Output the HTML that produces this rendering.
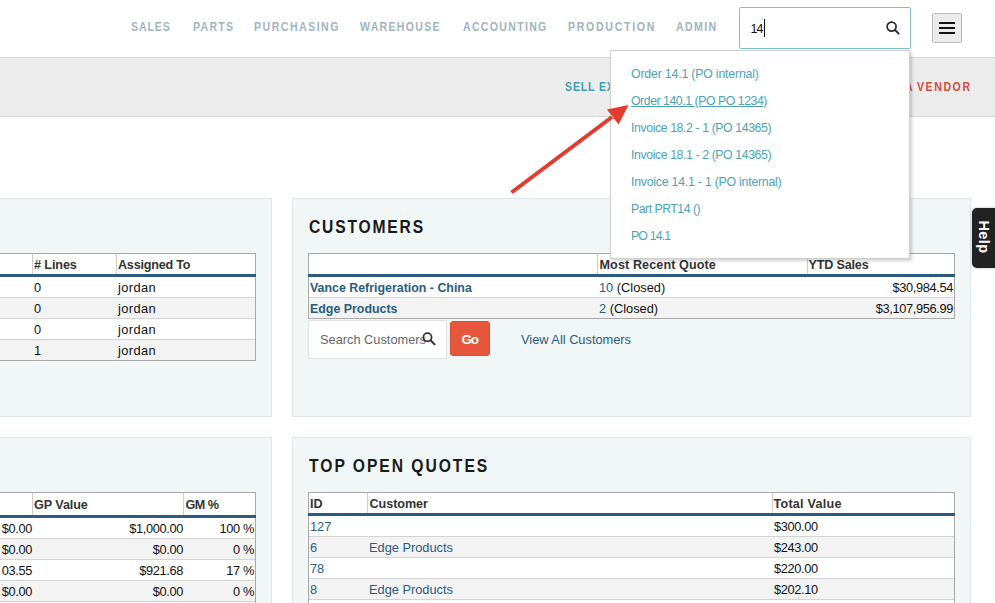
<!DOCTYPE html>
<html><head><meta charset="utf-8">
<style>
*{box-sizing:border-box;margin:0;padding:0}
html,body{width:995px;height:603px;overflow:hidden;background:#fff;font-family:"Liberation Sans",sans-serif;color:#111}
.t{position:absolute;white-space:nowrap}
.b{position:absolute}
</style></head><body>
<div class="t" style="left:131px;top:21.00px;font-size:12.3px;line-height:13.739px;font-weight:bold;color:#9fb4bf;letter-spacing:1.047px;transform:scaleX(0.86);transform-origin:0 0;">SALES</div>
<div class="t" style="left:192.5px;top:21.00px;font-size:12.3px;line-height:13.739px;font-weight:bold;color:#9fb4bf;letter-spacing:1.442px;transform:scaleX(0.86);transform-origin:0 0;">PARTS</div>
<div class="t" style="left:254px;top:21.00px;font-size:12.3px;line-height:13.739px;font-weight:bold;color:#9fb4bf;letter-spacing:1.724px;transform:scaleX(0.86);transform-origin:0 0;">PURCHASING</div>
<div class="t" style="left:360px;top:21.00px;font-size:12.3px;line-height:13.739px;font-weight:bold;color:#9fb4bf;letter-spacing:1.483px;transform:scaleX(0.86);transform-origin:0 0;">WAREHOUSE</div>
<div class="t" style="left:463px;top:21.00px;font-size:12.3px;line-height:13.739px;font-weight:bold;color:#9fb4bf;letter-spacing:1.501px;transform:scaleX(0.86);transform-origin:0 0;">ACCOUNTING</div>
<div class="t" style="left:568px;top:21.00px;font-size:12.3px;line-height:13.739px;font-weight:bold;color:#9fb4bf;letter-spacing:1.982px;transform:scaleX(0.86);transform-origin:0 0;">PRODUCTION</div>
<div class="t" style="left:676px;top:21.00px;font-size:12.3px;line-height:13.739px;font-weight:bold;color:#9fb4bf;letter-spacing:1.628px;transform:scaleX(0.86);transform-origin:0 0;">ADMIN</div>
<div class="b" style="left:739px;top:7px;width:172px;height:42px;border:1px solid #7dbfce;border-radius:2px;background:#fff"></div>
<div class="t" style="left:750.5px;top:23.00px;font-size:12.5px;line-height:13.963px;color:#111;letter-spacing:-1.0px;">14</div>
<div class="b" style="left:764px;top:19px;width:1.3px;height:18px;background:#111"></div>
<svg class="b" style="left:884px;top:19px" width="18" height="18" viewBox="0 0 18 18"><circle cx="7.6" cy="7.6" r="4.5" fill="none" stroke="#2a2a2a" stroke-width="1.7"/><line x1="10.8" y1="10.8" x2="14.6" y2="14.6" stroke="#2a2a2a" stroke-width="2" stroke-linecap="round"/></svg>
<div class="b" style="left:932px;top:13px;width:30px;height:30px;background:#ececec;border:1px solid #b8b8b8;border-radius:2px"></div>
<div class="b" style="left:939px;top:22px;width:16px;height:2.2px;background:#111"></div>
<div class="b" style="left:939px;top:27px;width:16px;height:2.2px;background:#111"></div>
<div class="b" style="left:939px;top:31.7px;width:16px;height:2.2px;background:#111"></div>
<div class="b" style="left:0px;top:57px;width:995px;height:60px;background:#ececec;border-top:1px solid #d6d6d6;border-bottom:1px solid #d6d6d6"></div>
<div class="t" style="left:565px;top:81.00px;font-size:12.3px;line-height:13.739px;font-weight:bold;color:#3d9db3;letter-spacing:0.969px;transform:scaleX(0.86);transform-origin:0 0;">SELL EX</div>
<div class="t" style="left:917px;top:81.00px;font-size:12.3px;line-height:13.739px;font-weight:bold;color:#d24e3b;letter-spacing:1.809px;transform:scaleX(0.86);transform-origin:0 0;">VENDOR</div>
<div class="t" style="left:905px;top:81.00px;font-size:12.3px;line-height:13.739px;font-weight:bold;color:#d24e3b;letter-spacing:0px;transform:scaleX(0.86);transform-origin:0 0;">A</div>
<div class="b" style="left:-10px;top:198px;width:282px;height:219px;background:#f1f6f7;border:1px solid #e0e5e6"></div>
<div class="b" style="left:292px;top:198px;width:679px;height:219px;background:#f1f6f7;border:1px solid #e0e5e6"></div>
<div class="b" style="left:-10px;top:437px;width:282px;height:200px;background:#f1f6f7;border:1px solid #e0e5e6"></div>
<div class="b" style="left:292px;top:437px;width:679px;height:200px;background:#f1f6f7;border:1px solid #e0e5e6"></div>
<div class="t" style="left:309px;top:218.00px;font-size:17.8px;line-height:19.883px;font-weight:bold;color:#1a1a1a;letter-spacing:2.051px;transform:scaleX(0.88);transform-origin:0 0;">CUSTOMERS</div>
<div class="t" style="left:309px;top:457.00px;font-size:17.8px;line-height:19.883px;font-weight:bold;color:#1a1a1a;letter-spacing:2.234px;transform:scaleX(0.88);transform-origin:0 0;">TOP OPEN QUOTES</div>
<div class="b" style="left:-5px;top:253px;width:261px;height:108px;background:#fff;border:1px solid #a9a9a9"></div>
<div class="b" style="left:-4px;top:297px;width:259px;height:21px;background:#f3f3f3"></div>
<div class="b" style="left:-4px;top:297px;width:259px;height:1px;background:#d3d3d3"></div>
<div class="b" style="left:-4px;top:318px;width:259px;height:1px;background:#d3d3d3"></div>
<div class="b" style="left:-4px;top:339px;width:259px;height:21px;background:#f3f3f3"></div>
<div class="b" style="left:-4px;top:339px;width:259px;height:1px;background:#d3d3d3"></div>
<div class="b" style="left:32px;top:254px;width:1px;height:20px;background:#cdcdcd"></div>
<div class="b" style="left:116px;top:254px;width:1px;height:20px;background:#cdcdcd"></div>
<div class="b" style="left:-5px;top:274px;width:261px;height:3px;background:#2b5b7f"></div>
<div class="b" style="left:308px;top:253px;width:647px;height:66px;background:#fff;border:1px solid #a9a9a9"></div>
<div class="b" style="left:309px;top:297px;width:645px;height:21px;background:#f3f3f3"></div>
<div class="b" style="left:309px;top:297px;width:645px;height:1px;background:#d3d3d3"></div>
<div class="b" style="left:597px;top:254px;width:1px;height:20px;background:#cdcdcd"></div>
<div class="b" style="left:807px;top:254px;width:1px;height:20px;background:#cdcdcd"></div>
<div class="b" style="left:308px;top:274px;width:647px;height:3px;background:#2b5b7f"></div>
<div class="b" style="left:-5px;top:492px;width:261px;height:131px;background:#fff;border:1px solid #a9a9a9"></div>
<div class="b" style="left:-4px;top:538px;width:259px;height:21px;background:#f3f3f3"></div>
<div class="b" style="left:-4px;top:538px;width:259px;height:1px;background:#d3d3d3"></div>
<div class="b" style="left:-4px;top:559px;width:259px;height:1px;background:#d3d3d3"></div>
<div class="b" style="left:-4px;top:580px;width:259px;height:21px;background:#f3f3f3"></div>
<div class="b" style="left:-4px;top:580px;width:259px;height:1px;background:#d3d3d3"></div>
<div class="b" style="left:-4px;top:601px;width:259px;height:1px;background:#d3d3d3"></div>
<div class="b" style="left:32px;top:493px;width:1px;height:22px;background:#cdcdcd"></div>
<div class="b" style="left:183px;top:493px;width:1px;height:22px;background:#cdcdcd"></div>
<div class="b" style="left:-5px;top:515px;width:261px;height:3px;background:#2b5b7f"></div>
<div class="b" style="left:308px;top:492px;width:647px;height:129px;background:#fff;border:1px solid #a9a9a9"></div>
<div class="b" style="left:309px;top:536px;width:645px;height:21px;background:#f3f3f3"></div>
<div class="b" style="left:309px;top:536px;width:645px;height:1px;background:#d3d3d3"></div>
<div class="b" style="left:309px;top:557px;width:645px;height:1px;background:#d3d3d3"></div>
<div class="b" style="left:309px;top:578px;width:645px;height:21px;background:#f3f3f3"></div>
<div class="b" style="left:309px;top:578px;width:645px;height:1px;background:#d3d3d3"></div>
<div class="b" style="left:309px;top:599px;width:645px;height:1px;background:#d3d3d3"></div>
<div class="b" style="left:367px;top:493px;width:1px;height:20px;background:#cdcdcd"></div>
<div class="b" style="left:772px;top:493px;width:1px;height:20px;background:#cdcdcd"></div>
<div class="b" style="left:308px;top:513px;width:647px;height:3px;background:#2b5b7f"></div>
<div class="t" style="left:34px;top:258.00px;font-size:12.6px;line-height:14.074px;font-weight:bold;color:#333;letter-spacing:-0.1px;"># Lines</div>
<div class="t" style="left:118px;top:258.00px;font-size:12.6px;line-height:14.074px;font-weight:bold;color:#333;letter-spacing:-0.22px;">Assigned To</div>
<div class="t" style="left:34px;top:281.00px;font-size:12.8px;line-height:14.298px;color:#111;letter-spacing:0px;">0</div>
<div class="t" style="left:118px;top:281.00px;font-size:12.8px;line-height:14.298px;color:#111;letter-spacing:0.4px;">jordan</div>
<div class="t" style="left:34px;top:302.00px;font-size:12.8px;line-height:14.298px;color:#111;letter-spacing:0px;">0</div>
<div class="t" style="left:118px;top:302.00px;font-size:12.8px;line-height:14.298px;color:#111;letter-spacing:0.4px;">jordan</div>
<div class="t" style="left:34px;top:323.00px;font-size:12.8px;line-height:14.298px;color:#111;letter-spacing:0px;">0</div>
<div class="t" style="left:118px;top:323.00px;font-size:12.8px;line-height:14.298px;color:#111;letter-spacing:0.4px;">jordan</div>
<div class="t" style="left:34px;top:344.00px;font-size:12.8px;line-height:14.298px;color:#111;letter-spacing:0px;">1</div>
<div class="t" style="left:118px;top:344.00px;font-size:12.8px;line-height:14.298px;color:#111;letter-spacing:0.4px;">jordan</div>
<div class="t" style="left:599.5px;top:258.00px;font-size:12.6px;line-height:14.074px;font-weight:bold;color:#333;letter-spacing:0.1px;">Most Recent Quote</div>
<div class="t" style="left:808.5px;top:258.00px;font-size:12.6px;line-height:14.074px;font-weight:bold;color:#333;letter-spacing:-0.175px;">YTD Sales</div>
<div class="t" style="left:310px;top:282.00px;font-size:12.4px;line-height:13.851px;font-weight:bold;color:#285c80;letter-spacing:0px;">Vance Refrigeration - China</div>
<div class="t" style="left:310px;top:303.00px;font-size:12.4px;line-height:13.851px;font-weight:bold;color:#285c80;letter-spacing:0px;">Edge Products</div>
<div class="t" style="left:599px;top:281.00px;font-size:12.8px;line-height:14.298px;color:#111;letter-spacing:0px;"><span style="color:#285c80">10</span> (Closed)</div>
<div class="t" style="left:599px;top:302.00px;font-size:12.8px;line-height:14.298px;color:#111;letter-spacing:0px;"><span style="color:#285c80">2</span> (Closed)</div>
<div class="t" style="right:42px;top:281.00px;font-size:12.8px;line-height:14.298px;color:#111;letter-spacing:-0.35px;">$30,984.54</div>
<div class="t" style="right:42px;top:302.00px;font-size:12.8px;line-height:14.298px;color:#111;letter-spacing:-0.35px;">$3,107,956.99</div>
<div class="b" style="left:308px;top:320px;width:139px;height:39px;background:#fff;border:1px solid #e2e2e2"></div>
<div class="t" style="left:320px;top:333.00px;font-size:12.8px;line-height:14.298px;color:#666;letter-spacing:0px;">Search Customers</div>
<svg class="b" style="left:420px;top:330px" width="18" height="18" viewBox="0 0 18 18"><circle cx="7.5" cy="7.2" r="4.1" fill="none" stroke="#333" stroke-width="1.7"/><line x1="10.6" y1="10.3" x2="14.6" y2="14.4" stroke="#333" stroke-width="2" stroke-linecap="round"/></svg>
<div class="b" style="left:450px;top:321px;width:40px;height:35px;background:#e6573d;border:1px solid #d94f36;border-radius:3px"></div>
<div class="t" style="left:461.5px;top:332.00px;font-size:13.6px;line-height:15.191px;font-weight:bold;color:#fff;letter-spacing:-1.4px;">Go</div>
<div class="t" style="left:521px;top:333.00px;font-size:12.8px;line-height:14.298px;color:#285c80;letter-spacing:0px;">View All Customers</div>
<div class="t" style="left:34px;top:498.00px;font-size:12.6px;line-height:14.074px;font-weight:bold;color:#333;letter-spacing:-0.071px;">GP Value</div>
<div class="t" style="left:185.5px;top:498.00px;font-size:12.6px;line-height:14.074px;font-weight:bold;color:#333;letter-spacing:-0.5px;">GM %</div>
<div class="t" style="right:963px;top:522.00px;font-size:12.8px;line-height:14.298px;color:#111;letter-spacing:-0.35px;">$0.00</div>
<div class="t" style="right:812px;top:522.00px;font-size:12.8px;line-height:14.298px;color:#111;letter-spacing:-0.35px;">$1,000.00</div>
<div class="t" style="right:741px;top:522.00px;font-size:12.8px;line-height:14.298px;color:#111;letter-spacing:-0.35px;">100 %</div>
<div class="t" style="right:963px;top:543.00px;font-size:12.8px;line-height:14.298px;color:#111;letter-spacing:-0.35px;">$0.00</div>
<div class="t" style="right:812px;top:543.00px;font-size:12.8px;line-height:14.298px;color:#111;letter-spacing:-0.35px;">$0.00</div>
<div class="t" style="right:741px;top:543.00px;font-size:12.8px;line-height:14.298px;color:#111;letter-spacing:-0.35px;">0 %</div>
<div class="t" style="right:963px;top:564.00px;font-size:12.8px;line-height:14.298px;color:#111;letter-spacing:-0.35px;">03.55</div>
<div class="t" style="right:812px;top:564.00px;font-size:12.8px;line-height:14.298px;color:#111;letter-spacing:-0.35px;">$921.68</div>
<div class="t" style="right:741px;top:564.00px;font-size:12.8px;line-height:14.298px;color:#111;letter-spacing:-0.35px;">17 %</div>
<div class="t" style="right:963px;top:585.00px;font-size:12.8px;line-height:14.298px;color:#111;letter-spacing:-0.35px;">$0.00</div>
<div class="t" style="right:812px;top:585.00px;font-size:12.8px;line-height:14.298px;color:#111;letter-spacing:-0.35px;">$0.00</div>
<div class="t" style="right:741px;top:585.00px;font-size:12.8px;line-height:14.298px;color:#111;letter-spacing:-0.35px;">0 %</div>
<div class="t" style="left:310px;top:497.00px;font-size:12.6px;line-height:14.074px;font-weight:bold;color:#333;letter-spacing:0px;">ID</div>
<div class="t" style="left:369.5px;top:497.00px;font-size:12.6px;line-height:14.074px;font-weight:bold;color:#333;letter-spacing:-0.043px;">Customer</div>
<div class="t" style="left:773.5px;top:497.00px;font-size:12.6px;line-height:14.074px;font-weight:bold;color:#333;letter-spacing:0.24px;">Total Value</div>
<div class="t" style="left:310px;top:520.00px;font-size:12.8px;line-height:14.298px;color:#285c80;letter-spacing:0px;">127</div>
<div class="t" style="left:774px;top:520.00px;font-size:12.8px;line-height:14.298px;color:#111;letter-spacing:-0.35px;">$300.00</div>
<div class="t" style="left:310px;top:541.00px;font-size:12.8px;line-height:14.298px;color:#285c80;letter-spacing:0px;">6</div>
<div class="t" style="left:369px;top:541.00px;font-size:12.8px;line-height:14.298px;color:#285c80;letter-spacing:0px;">Edge Products</div>
<div class="t" style="left:774px;top:541.00px;font-size:12.8px;line-height:14.298px;color:#111;letter-spacing:-0.35px;">$243.00</div>
<div class="t" style="left:310px;top:562.00px;font-size:12.8px;line-height:14.298px;color:#285c80;letter-spacing:0px;">78</div>
<div class="t" style="left:774px;top:562.00px;font-size:12.8px;line-height:14.298px;color:#111;letter-spacing:-0.35px;">$220.00</div>
<div class="t" style="left:310px;top:583.00px;font-size:12.8px;line-height:14.298px;color:#285c80;letter-spacing:0px;">8</div>
<div class="t" style="left:369px;top:583.00px;font-size:12.8px;line-height:14.298px;color:#285c80;letter-spacing:0px;">Edge Products</div>
<div class="t" style="left:774px;top:583.00px;font-size:12.8px;line-height:14.298px;color:#111;letter-spacing:-0.35px;">$202.10</div>
<div class="b" style="left:610px;top:50px;width:300px;height:209px;background:#fff;border:1px solid #cfcfcf;box-shadow:2px 2px 3px rgba(0,0,0,.18)"></div>
<div class="t" style="left:631px;top:68.00px;font-size:12.3px;line-height:13.739px;color:#4da2b4;letter-spacing:-0.174px;">Order 14.1 (PO internal)</div>
<div class="t" style="left:631px;top:95.00px;font-size:12.3px;line-height:13.739px;color:#4da2b4;letter-spacing:-0.457px;text-decoration:underline;">Order 140.1 (PO PO 1234)</div>
<div class="t" style="left:631px;top:122.00px;font-size:12.3px;line-height:13.739px;color:#4da2b4;letter-spacing:-0.404px;">Invoice 18.2 - 1 (PO 14365)</div>
<div class="t" style="left:631px;top:149.00px;font-size:12.3px;line-height:13.739px;color:#4da2b4;letter-spacing:-0.404px;">Invoice 18.1 - 2 (PO 14365)</div>
<div class="t" style="left:631px;top:176.00px;font-size:12.3px;line-height:13.739px;color:#4da2b4;letter-spacing:-0.224px;">Invoice 14.1 - 1 (PO internal)</div>
<div class="t" style="left:631px;top:203.00px;font-size:12.3px;line-height:13.739px;color:#4da2b4;letter-spacing:-0.5px;">Part PRT14 ()</div>
<div class="t" style="left:631px;top:230.00px;font-size:12.3px;line-height:13.739px;color:#4da2b4;letter-spacing:-0.833px;">PO 14.1</div>
<svg class="b" style="left:0;top:0" width="995" height="603" viewBox="0 0 995 603"><line x1="511.5" y1="192.5" x2="612" y2="117" stroke="#e33b2e" stroke-width="4" stroke-linecap="butt"/><polygon points="628.5,105 607,109.5 618.6,124.5" fill="#e33b2e"/></svg>
<div class="b" style="left:972px;top:208px;width:30px;height:60px;background:#222;border-radius:5px;box-shadow:0 0 3px rgba(0,0,0,.3)"></div>
<div class="t" style="left:964px;top:226.7px;width:40px;height:20px;font-size:14.5px;letter-spacing:0.4px;font-weight:bold;color:#fff;transform:rotate(90deg);line-height:20px;text-align:center;">Help</div>
</body></html>
